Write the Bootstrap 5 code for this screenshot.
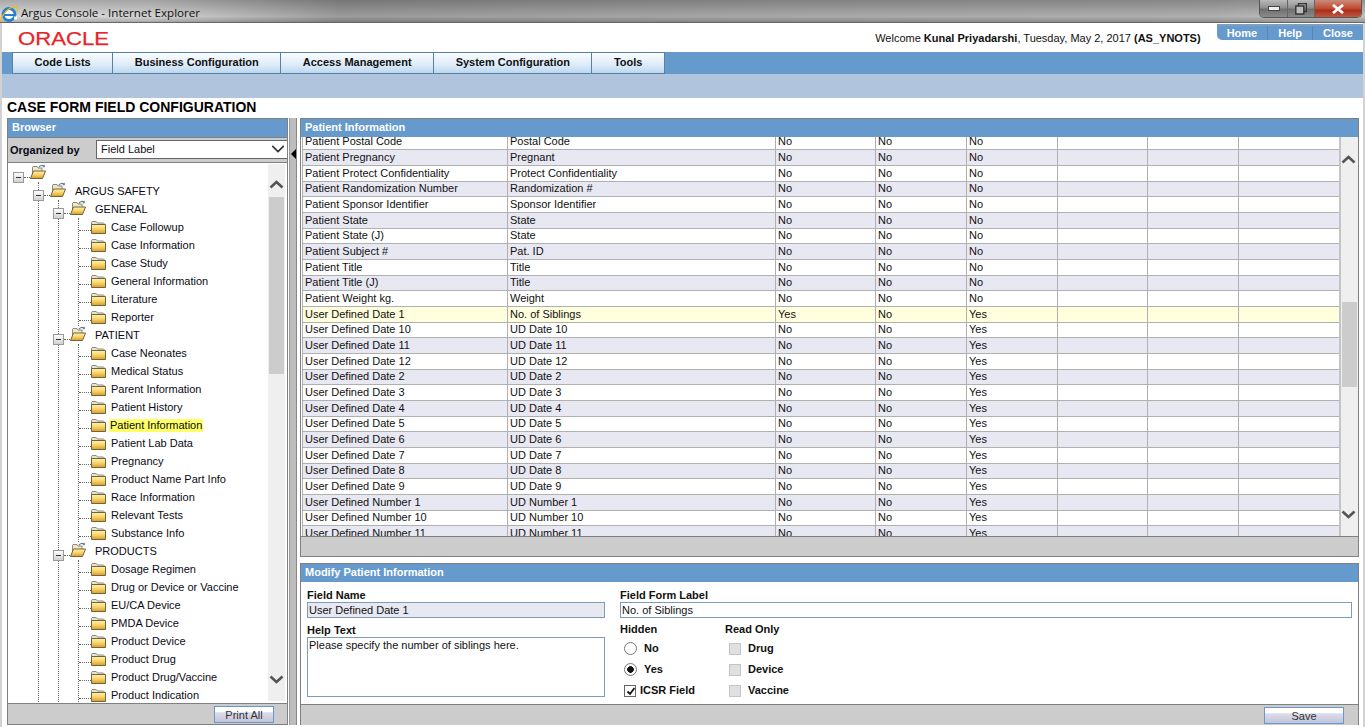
<!DOCTYPE html>
<html lang="en">
<head>
<meta charset="utf-8">
<title>Argus Console - Internet Explorer</title>
<link href="https://cdn.jsdelivr.net/npm/bootstrap@5.3.0/dist/css/bootstrap.min.css" rel="stylesheet">
<style>
html,body{height:727px;overflow:hidden}
body{font:11px/13px "Liberation Sans",Arial,sans-serif;color:#0a0a14;background:#fff}
.win{height:727px;border-left:2px solid #d2d2d2;border-right:2px solid #d2d2d2}
.titlebar{height:23px;margin:0 -2px;background:linear-gradient(180deg,rgba(70,70,70,.3),rgba(255,255,255,.14) 75%,rgba(90,90,90,.3)),linear-gradient(90deg,#d4d4d4 0,#cbcbcb 150px,#8b8b8b 340px,#9b9b9b 800px,#a2a2a2 1200px,#b5b5b5 100%);border-bottom:1px solid #666}
.titlebar .ttl{font:11.6px "Open Sans","Noto Sans",sans-serif;color:#111;margin-left:3px;margin-top:5px}
.ctl{height:18px;width:103px;margin-right:3px;border:1px solid #555;border-top:0;border-radius:0 0 5px 5px;overflow:hidden}
.ctl span{display:flex;align-items:center;justify-content:center;border-right:1px solid #666;background:linear-gradient(180deg,#b9b9b9,#8f8f8f 45%,#6f6f6f 55%,#8b8b8b)}
.ctl .m{width:28px}.ctl .r{width:27px}
.ctl .c{flex:1;border:0;background:linear-gradient(180deg,#c98a7a,#c24a32 50%,#a82d18 60%,#bf5a44)}
.hdr{height:29px}
.logo{margin-left:14px;margin-top:7px}
.logo text{font:18px "Liberation Sans",sans-serif;fill:#e8242a;stroke:#e8242a;stroke-width:.25px}
.welcome{margin-left:auto;margin-top:9px;margin-right:16px;color:#111}
.tabs{height:16px;margin-top:1px;background:#6699cc;border-top:2px solid #7f9fc0;border-bottom-left-radius:5px}
.tabs a{display:block;padding:0 10px;text-align:center;color:#fff;font-weight:700;text-decoration:none;border-left:1px solid #5a86b4;line-height:14px}
.tabs a:first-child{border-left:0}
.mainnav{height:22px;background:#6699cc;padding-left:10px}
.mainnav a.btn{font:bold 11px/19px "Liberation Sans",sans-serif;color:#111;padding:0 21.5px;margin-right:-1px;border:1px solid #5b7fa3;border-radius:0;background:linear-gradient(180deg,#fbfdff,#dcebf8 60%,#bcd7f0)}
.subnav{height:24px;background:#b0c4de}
h1.page{font:bold 14px/18px "Liberation Sans",sans-serif;margin:0 0 0 5px;color:#000;height:20px}
.panels{height:607px;padding-left:5px}
.left{width:281px}
.panel{border:1px solid #808080}
.phead{height:18px;background:#6699cc;color:#fff;font-weight:700;line-height:17px;padding-left:4px;flex:none}
.left .panel,.left{display:flex;flex-direction:column}
.org{height:26px;background:#ccc;border-top:1px solid #808080;border-bottom:1px solid #808080;padding-left:2px;font-weight:700;flex:none;font-size:11px}
.org span{width:86px;flex:none}
.org .form-select{width:192px;height:19px;border:1px solid #666;border-right:0;border-radius:0;padding:0 4px;font:11px "Liberation Sans",sans-serif;color:#111;background-size:18px 14px;background-position:right 0 center;box-shadow:none;margin-top:-2px}
.treebox{flex:1;min-height:0;overflow:hidden}
.tree{width:260px;padding:1px 0 0 11px;overflow:hidden}
.tree ul{list-style:none;margin:0;padding:0}
.tree ul ul{margin-left:19px;border-left:1px dotted #666}
.node{height:18px;display:flex;align-items:center;white-space:nowrap}
.box{width:11px;height:11px;margin-left:-6px;align-self:flex-end;margin-bottom:-1px;flex:none}
.dots{border-top:1px dotted #666;width:6px;align-self:flex-end;margin-bottom:4px;flex:none}
.node .fo{width:16px;height:15px;margin-bottom:3px;flex:none}
.node .lbl{margin-left:9px}
.leaf .dots{width:12px;margin-bottom:5px}
.leaf .fc{width:15px;height:13px;margin-top:1px;flex:none}
.leaf .lbl{margin-left:5px}
.leaf .sel{background:#ffff66;margin-left:3px;padding:0 1px 0 1px}
.sb{background:#efefef;flex:none;display:flex;flex-direction:column;align-items:center}
.treebox .sb{width:17px;margin-top:1px;margin-right:2px;height:537px}
.treebox .sb .up{margin-top:16px}
.thumb{background:#ccc;width:15px;flex:none}
.treebox .thumb{height:177px;margin-top:8px}
.treebox .sb .dn{margin-top:auto;margin-bottom:17px}
.foot{background:#ccc;border-top:1px solid #808080;flex:none}
.left .foot{height:21px;padding:2px 13px 0 0}
.bbtn{font:11px/14px "Liberation Sans",sans-serif;color:#333;border:1px solid #6699cc;border-radius:0;padding:0;background:linear-gradient(180deg,#fff 32%,#dcdcea 38%,#c4c4da);height:17px}
.bbtn:hover{color:#333;border-color:#6699cc}
.print{width:60px}.save{width:80px}
.split{width:8px;margin-left:1px;background:#bdbdbd;border-left:1px solid #999;border-right:1px solid #888;flex:none;position:relative}
.split svg{position:absolute;left:1px;top:31px}
.right{margin-left:3px;width:1059px}
.upper{height:439px;flex:none}
.lower{height:162px;margin-top:6px;flex:none}
.gridwrap{height:399px;overflow:hidden;flex:none}
.grid{flex:1;overflow:hidden;padding-left:1px}
.grid table{table-layout:fixed;width:1037px;border-collapse:collapse;margin-top:-3px}
.c1{width:205px}.c2{width:268px}.c3{width:100px}.c4{width:91px}.c5{width:90px}.c6{width:101px}
.grid td{height:15.68px;padding:0 0 1px 2px;border-bottom:1px solid #b0b0b0;border-left:1px solid #b0b0b0;color:#111;line-height:12px;white-space:nowrap;overflow:hidden;background:#fff}
.grid tr:nth-child(even) td{background:#e8e8f2}
.grid tr.hit td{background:#ffffdd}
.gridwrap .sb{width:19px;border-left:2px solid #c4c4c4;align-items:flex-start}
.gridwrap .up{margin-top:18px}.gridwrap .thumb{height:85px;margin-top:138px;margin-left:1px}
.gridwrap .dn{margin-top:123px}
.upper .foot{height:20px}
.lower form{height:122px;flex:none;padding:7px 6px 0;display:flex;gap:15px}
.f1{width:298px}.f2{width:732px}
.f-lbl{font-weight:700;font-size:11px;line-height:12px;margin-bottom:1px;color:#111}
.form-control.fi{height:16px;min-height:0;padding:0 1px;font:11px/14px "Liberation Sans",sans-serif;border:1px solid #7d9cbb;border-radius:0;color:#111;box-shadow:none}
.form-control.fi:disabled,.form-control.fi[readonly]{background:#e8e8f2}
textarea.form-control.fi{height:60px;resize:none;padding-top:1px;line-height:13px}
.mt-h{margin-top:6px}
.rg .f-lbl{margin-bottom:2px}
.rg .mt-h{margin-top:5px;margin-bottom:3px}
.form-check{min-height:0;padding:0;margin:0;display:flex;align-items:center;height:21px;font-weight:700;color:#111;gap:7px;font-size:11px}
.form-check .form-check-input{float:none;margin:0;flex:none}
.form-check .radio13{width:13px;height:13px;border:1px solid #777;background:#fff;margin-left:4px}
.form-check .radio13:checked{background:radial-gradient(circle,#111 0 3px,#fff 3.6px);border-color:#777}
.form-check .chk[type=checkbox]{width:12px;height:12px;border:1px solid #666;border-radius:0;background:#fff;margin-left:4px}
.form-check .chk[type=checkbox]:checked{background-color:#fff;border-color:#666;background-size:12px;background-image:url("data:image/svg+xml,%3csvg xmlns='http://www.w3.org/2000/svg' viewBox='0 0 12 12'%3e%3cpath fill='none' stroke='%23111' stroke-width='1.8' d='M2.500 5.500l2.500 2.500 4.500-6'/%3e%3c/svg%3e")}
.gap3{gap:4px!important}
.form-check .ro[type=checkbox]{width:12px;height:12px;background:#e0e0e0;border:1px solid #c4c4c4;border-radius:0;margin-left:4px;opacity:1}
.col-h{width:105px}
.lower .foot{height:21px;padding:2px 14px 0 0}
</style>
</head>
<body>
<svg width="0" height="0" class="position-absolute">
<defs>
<linearGradient id="gf" x1="0" y1="0" x2="0" y2="1"><stop offset="0" stop-color="#fff2b0"/><stop offset=".5" stop-color="#f8d468"/><stop offset="1" stop-color="#d99a28"/></linearGradient>
<linearGradient id="gb" x1="0" y1="0" x2="0" y2="1"><stop offset="0" stop-color="#fff"/><stop offset="1" stop-color="#cfcfcf"/></linearGradient>
<symbol id="folder" viewBox="0 0 15 13"><path d="M.5 3V1.2L1.2.5h4L6.500 2h6l.5.5V4H.5Z" fill="#e8e4d4" stroke="#8f8a78"/><path d="M.5 3.500h14v9H.5Z" fill="url(#gf)" stroke="#6e6440"/></symbol>
<symbol id="ofolder" viewBox="0 0 16 15"><path d="M2.500 12V3.200L3 2.500h4L8 4h4v3" fill="#efe7c8" stroke="#8f8a78"/><path d="M.5 14.500 3.500 7h12l-3 7.500Z" fill="url(#gf)" stroke="#6e6440"/><path d="M9 3.200C10 1.400 12.300.8 14 2" fill="none" stroke="#6a7a90" stroke-width="1.200"/><path d="M14.800.6v2.600h-2.600Z" fill="#6a7a90"/></symbol>
<symbol id="minus" viewBox="0 0 11 11"><rect x=".5" y=".5" width="10" height="10" fill="url(#gb)" stroke="#9a9a9a"/><path d="M3 5.500h5" stroke="#333"/></symbol>
<symbol id="chup" viewBox="0 0 15 9"><path d="M1.500 7.500 7.500 2l6 5.500" fill="none" stroke="#555" stroke-width="2.600"/></symbol>
<symbol id="chdn" viewBox="0 0 15 9"><path d="M1.500 1.500 7.500 7l6-5.500" fill="none" stroke="#555" stroke-width="2.600"/></symbol>
</defs>
</svg>
<div class="win d-flex flex-column">
  <div class="titlebar d-flex align-items-start flex-none">
    <svg width="18" height="20" viewBox="0 0 18 20" class="mt-1" aria-hidden="true"><circle cx="9" cy="10.500" r="6" fill="#fff" stroke="#2a7fd0" stroke-width="2.800"/><path d="M4 11h10" stroke="#2a7fd0" stroke-width="2"/><path d="M14 14h3" stroke="#fff" stroke-width="3"/><path d="M1 18C-1 14 9 2 15.500 3c2.500.4 2.500 2.500 1.500 5" fill="none" stroke="#f0b820" stroke-width="1.300"/></svg>
    <span class="ttl">Argus Console - Internet Explorer</span>
    <div class="ctl d-flex ms-auto">
      <span class="m"><svg width="12" height="6"><rect x=".5" y=".5" width="11" height="4" fill="#eee" stroke="#444"/></svg></span>
      <span class="r"><svg width="12" height="12"><rect x="3.500" y=".5" width="8" height="8" fill="none" stroke="#333" stroke-width="1.400"/><rect x=".8" y="3" width="8" height="8" fill="#bbb" stroke="#333" stroke-width="1.400"/></svg></span>
      <span class="c"><svg width="14" height="10"><path d="M2 1l10 8M12 1 2 9" stroke="#fff" stroke-width="2.800"/></svg></span>
    </div>
  </div>
  <div class="hdr d-flex align-items-start">
    <svg class="logo" width="94" height="20" viewBox="0 0 94 20" role="img" aria-label="ORACLE"><text x="2" y="15" textLength="91" lengthAdjust="spacingAndGlyphs">ORACLE</text></svg>
    <div class="welcome">Welcome <b>Kunal Priyadarshi</b>, Tuesday, May 2, 2017 <b>(AS_YNOTS)</b></div>
    <div class="tabs d-flex"><a href="#">Home</a><a href="#">Help</a><a href="#">Close</a></div>
  </div>
  <nav class="mainnav d-flex">
    <a class="btn" href="#">Code Lists</a><a class="btn" href="#">Business Configuration</a><a class="btn" href="#">Access Management</a><a class="btn" href="#">System Configuration</a><a class="btn" href="#">Tools</a>
  </nav>
  <div class="subnav"></div>
  <h1 class="page">CASE FORM FIELD CONFIGURATION</h1>
  <div class="panels d-flex">
    <section class="left">
      <div class="panel flex-grow-1 d-flex flex-column overflow-hidden">
        <div class="phead">Browser</div>
        <div class="org d-flex align-items-center"><span>Organized by</span>
          <select class="form-select" aria-label="Organized by"><option>Field Label</option></select></div>
        <div class="treebox d-flex justify-content-between">
          <div class="tree">
            <ul>
              <li><div class="node"><svg class="box"><use href="#minus"/></svg><span class="dots"></span><svg class="fo"><use href="#ofolder"/></svg></div>
                <ul><li><div class="node"><svg class="box"><use href="#minus"/></svg><span class="dots"></span><svg class="fo"><use href="#ofolder"/></svg><span class="lbl">ARGUS SAFETY</span></div>
                  <ul>
                    <li><div class="node"><svg class="box"><use href="#minus"/></svg><span class="dots"></span><svg class="fo"><use href="#ofolder"/></svg><span class="lbl">GENERAL</span></div>
                      <ul>
                        <li class="node leaf"><span class="dots"></span><svg class="fc"><use href="#folder"/></svg><span class="lbl">Case Followup</span></li>
                        <li class="node leaf"><span class="dots"></span><svg class="fc"><use href="#folder"/></svg><span class="lbl">Case Information</span></li>
                        <li class="node leaf"><span class="dots"></span><svg class="fc"><use href="#folder"/></svg><span class="lbl">Case Study</span></li>
                        <li class="node leaf"><span class="dots"></span><svg class="fc"><use href="#folder"/></svg><span class="lbl">General Information</span></li>
                        <li class="node leaf"><span class="dots"></span><svg class="fc"><use href="#folder"/></svg><span class="lbl">Literature</span></li>
                        <li class="node leaf"><span class="dots"></span><svg class="fc"><use href="#folder"/></svg><span class="lbl">Reporter</span></li>
                      </ul></li>
                    <li><div class="node"><svg class="box"><use href="#minus"/></svg><span class="dots"></span><svg class="fo"><use href="#ofolder"/></svg><span class="lbl">PATIENT</span></div>
                      <ul>
                        <li class="node leaf"><span class="dots"></span><svg class="fc"><use href="#folder"/></svg><span class="lbl">Case Neonates</span></li>
                        <li class="node leaf"><span class="dots"></span><svg class="fc"><use href="#folder"/></svg><span class="lbl">Medical Status</span></li>
                        <li class="node leaf"><span class="dots"></span><svg class="fc"><use href="#folder"/></svg><span class="lbl">Parent Information</span></li>
                        <li class="node leaf"><span class="dots"></span><svg class="fc"><use href="#folder"/></svg><span class="lbl">Patient History</span></li>
                        <li class="node leaf"><span class="dots"></span><svg class="fc"><use href="#folder"/></svg><span class="lbl sel">Patient Information</span></li>
                        <li class="node leaf"><span class="dots"></span><svg class="fc"><use href="#folder"/></svg><span class="lbl">Patient Lab Data</span></li>
                        <li class="node leaf"><span class="dots"></span><svg class="fc"><use href="#folder"/></svg><span class="lbl">Pregnancy</span></li>
                        <li class="node leaf"><span class="dots"></span><svg class="fc"><use href="#folder"/></svg><span class="lbl">Product Name Part Info</span></li>
                        <li class="node leaf"><span class="dots"></span><svg class="fc"><use href="#folder"/></svg><span class="lbl">Race Information</span></li>
                        <li class="node leaf"><span class="dots"></span><svg class="fc"><use href="#folder"/></svg><span class="lbl">Relevant Tests</span></li>
                        <li class="node leaf"><span class="dots"></span><svg class="fc"><use href="#folder"/></svg><span class="lbl">Substance Info</span></li>
                      </ul></li>
                    <li><div class="node"><svg class="box"><use href="#minus"/></svg><span class="dots"></span><svg class="fo"><use href="#ofolder"/></svg><span class="lbl">PRODUCTS</span></div>
                      <ul>
                        <li class="node leaf"><span class="dots"></span><svg class="fc"><use href="#folder"/></svg><span class="lbl">Dosage Regimen</span></li>
                        <li class="node leaf"><span class="dots"></span><svg class="fc"><use href="#folder"/></svg><span class="lbl">Drug or Device or Vaccine</span></li>
                        <li class="node leaf"><span class="dots"></span><svg class="fc"><use href="#folder"/></svg><span class="lbl">EU/CA Device</span></li>
                        <li class="node leaf"><span class="dots"></span><svg class="fc"><use href="#folder"/></svg><span class="lbl">PMDA Device</span></li>
                        <li class="node leaf"><span class="dots"></span><svg class="fc"><use href="#folder"/></svg><span class="lbl">Product Device</span></li>
                        <li class="node leaf"><span class="dots"></span><svg class="fc"><use href="#folder"/></svg><span class="lbl">Product Drug</span></li>
                        <li class="node leaf"><span class="dots"></span><svg class="fc"><use href="#folder"/></svg><span class="lbl">Product Drug/Vaccine</span></li>
                        <li class="node leaf"><span class="dots"></span><svg class="fc"><use href="#folder"/></svg><span class="lbl">Product Indication</span></li>
                      </ul></li>
                  </ul></li></ul></li>
            </ul>
          </div>
          <div class="sb"><svg class="up" width="15" height="9"><use href="#chup"/></svg><div class="thumb"></div><svg class="dn" width="15" height="9"><use href="#chdn"/></svg></div>
        </div>
        <div class="foot d-flex justify-content-end"><button type="button" class="btn bbtn print">Print All</button></div>
      </div>
    </section>
    <div class="split"><svg width="5" height="10"><path d="M5 0v10L0 5Z" fill="#000"/></svg></div>
    <section class="right d-flex flex-column">
      <div class="panel upper d-flex flex-column">
        <div class="phead">Patient Information</div>
        <div class="gridwrap d-flex">
          <div class="grid">
            <table>
              <colgroup><col class="c1"><col class="c2"><col class="c3"><col class="c4"><col class="c4"><col class="c5"><col class="c4"><col class="c6"></colgroup>
              <tbody>
              <tr><td>Patient Postal Code</td><td>Postal Code</td><td>No</td><td>No</td><td>No</td><td></td><td></td><td></td></tr>
              <tr><td>Patient Pregnancy</td><td>Pregnant</td><td>No</td><td>No</td><td>No</td><td></td><td></td><td></td></tr>
              <tr><td>Patient Protect Confidentiality</td><td>Protect Confidentiality</td><td>No</td><td>No</td><td>No</td><td></td><td></td><td></td></tr>
              <tr><td>Patient Randomization Number</td><td>Randomization #</td><td>No</td><td>No</td><td>No</td><td></td><td></td><td></td></tr>
              <tr><td>Patient Sponsor Identifier</td><td>Sponsor Identifier</td><td>No</td><td>No</td><td>No</td><td></td><td></td><td></td></tr>
              <tr><td>Patient State</td><td>State</td><td>No</td><td>No</td><td>No</td><td></td><td></td><td></td></tr>
              <tr><td>Patient State (J)</td><td>State</td><td>No</td><td>No</td><td>No</td><td></td><td></td><td></td></tr>
              <tr><td>Patient Subject #</td><td>Pat. ID</td><td>No</td><td>No</td><td>No</td><td></td><td></td><td></td></tr>
              <tr><td>Patient Title</td><td>Title</td><td>No</td><td>No</td><td>No</td><td></td><td></td><td></td></tr>
              <tr><td>Patient Title (J)</td><td>Title</td><td>No</td><td>No</td><td>No</td><td></td><td></td><td></td></tr>
              <tr><td>Patient Weight kg.</td><td>Weight</td><td>No</td><td>No</td><td>No</td><td></td><td></td><td></td></tr>
              <tr class="hit"><td>User Defined Date 1</td><td>No. of Siblings</td><td>Yes</td><td>No</td><td>Yes</td><td></td><td></td><td></td></tr>
              <tr><td>User Defined Date 10</td><td>UD Date 10</td><td>No</td><td>No</td><td>Yes</td><td></td><td></td><td></td></tr>
              <tr><td>User Defined Date 11</td><td>UD Date 11</td><td>No</td><td>No</td><td>Yes</td><td></td><td></td><td></td></tr>
              <tr><td>User Defined Date 12</td><td>UD Date 12</td><td>No</td><td>No</td><td>Yes</td><td></td><td></td><td></td></tr>
              <tr><td>User Defined Date 2</td><td>UD Date 2</td><td>No</td><td>No</td><td>Yes</td><td></td><td></td><td></td></tr>
              <tr><td>User Defined Date 3</td><td>UD Date 3</td><td>No</td><td>No</td><td>Yes</td><td></td><td></td><td></td></tr>
              <tr><td>User Defined Date 4</td><td>UD Date 4</td><td>No</td><td>No</td><td>Yes</td><td></td><td></td><td></td></tr>
              <tr><td>User Defined Date 5</td><td>UD Date 5</td><td>No</td><td>No</td><td>Yes</td><td></td><td></td><td></td></tr>
              <tr><td>User Defined Date 6</td><td>UD Date 6</td><td>No</td><td>No</td><td>Yes</td><td></td><td></td><td></td></tr>
              <tr><td>User Defined Date 7</td><td>UD Date 7</td><td>No</td><td>No</td><td>Yes</td><td></td><td></td><td></td></tr>
              <tr><td>User Defined Date 8</td><td>UD Date 8</td><td>No</td><td>No</td><td>Yes</td><td></td><td></td><td></td></tr>
              <tr><td>User Defined Date 9</td><td>UD Date 9</td><td>No</td><td>No</td><td>Yes</td><td></td><td></td><td></td></tr>
              <tr><td>User Defined Number 1</td><td>UD Number 1</td><td>No</td><td>No</td><td>Yes</td><td></td><td></td><td></td></tr>
              <tr><td>User Defined Number 10</td><td>UD Number 10</td><td>No</td><td>No</td><td>Yes</td><td></td><td></td><td></td></tr>
              <tr><td>User Defined Number 11</td><td>UD Number 11</td><td>No</td><td>No</td><td>Yes</td><td></td><td></td><td></td></tr>
              </tbody>
            </table>
          </div>
          <div class="sb"><svg class="up" width="15" height="9"><use href="#chup"/></svg><div class="thumb"></div><svg class="dn" width="15" height="9"><use href="#chdn"/></svg></div>
        </div>
        <div class="foot"></div>
      </div>
      <div class="panel lower d-flex flex-column">
        <div class="phead">Modify Patient Information</div>
        <form>
          <div class="f1">
            <div class="f-lbl">Field Name</div>
            <input class="form-control fi" readonly value="User Defined Date 1" aria-label="Field Name">
            <div class="f-lbl mt-h">Help Text</div>
            <textarea class="form-control fi" aria-label="Help Text">Please specify the number of siblings here.</textarea>
          </div>
          <div class="f2">
            <div class="f-lbl">Field Form Label</div>
            <input class="form-control fi" value="No. of Siblings" aria-label="Field Form Label">
            <div class="d-flex rg">
              <div class="col-h">
                <div class="f-lbl mt-h">Hidden</div>
                <label class="form-check"><input class="form-check-input radio13" type="radio" name="h">No</label>
                <label class="form-check"><input class="form-check-input radio13" type="radio" name="h" checked>Yes</label>
                <label class="form-check gap3"><input class="form-check-input chk" type="checkbox" checked>ICSR Field</label>
              </div>
              <div>
                <div class="f-lbl mt-h">Read Only</div>
                <label class="form-check"><input class="form-check-input ro" type="checkbox" disabled>Drug</label>
                <label class="form-check"><input class="form-check-input ro" type="checkbox" disabled>Device</label>
                <label class="form-check"><input class="form-check-input ro" type="checkbox" disabled>Vaccine</label>
              </div>
            </div>
          </div>
        </form>
        <div class="foot d-flex justify-content-end"><button type="button" class="btn bbtn save">Save</button></div>
      </div>
    </section>
  </div>
</div>
<script src="https://cdn.jsdelivr.net/npm/bootstrap@5.3.0/dist/js/bootstrap.bundle.min.js"></script>
</body>
</html>
